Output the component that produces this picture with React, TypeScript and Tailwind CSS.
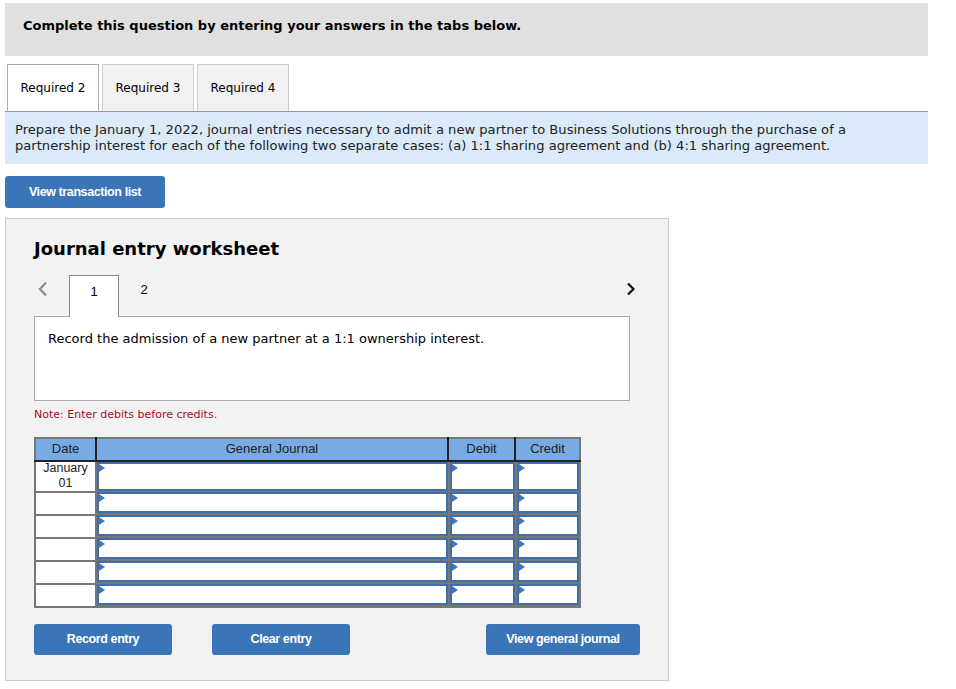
import React from "react";

const verdana = { fontFamily: '"DejaVu Sans", Verdana, sans-serif' };

function Btn({ label, className }: { label: string; className?: string }) {
  return (
    <button
      className={`h-[31px] rounded-[3px] bg-[#3a75b7] text-white text-[12.5px] font-bold tracking-[-0.4px] font-['Liberation_Sans',Arial,sans-serif] ${className ?? ""}`}
    >
      {label}
    </button>
  );
}

function Cell({ tall }: { tall?: boolean }) {
  return (
    <div className={`relative ${tall ? "h-[29px]" : "h-[21px]"} border-2 border-[#3e6fa8] bg-white`}>
      <span className="absolute left-0 top-0 h-0 w-0 border-y-[4px] border-l-[6px] border-y-transparent border-l-[#3e78c0]" />
    </div>
  );
}

export default function App() {
  const rows = [0, 1, 2, 3, 4, 5];
  return (
    <div className="w-[956px] h-[689px] bg-white text-[#222]" style={verdana}>
      <div className="pt-[3px] px-[5px] w-[923px] box-content">
        <div className="h-[53px] bg-[#e0e0e0] flex items-center pl-[18px] pb-[8px] text-[13px] font-bold text-black">
          Complete this question by entering your answers in the tabs below.
        </div>

        {/* tabs */}
        <div className="mt-[8px] flex gap-[3px] pl-[2px] border-b border-[#999]">
          <div className="w-[92px] h-[47px] -mb-px bg-white border border-[#aaa] border-b-white flex items-center justify-center text-[12px] text-black">
            Required 2
          </div>
          <div className="w-[92px] h-[47px] bg-[#f2f2f2] border border-[#ccc] border-b-0 flex items-center justify-center text-[12px] text-black">
            Required 3
          </div>
          <div className="w-[92px] h-[47px] bg-[#f2f2f2] border border-[#ccc] border-b-0 flex items-center justify-center text-[12px] text-black">
            Required 4
          </div>
        </div>

        <div className="h-[52px] bg-[#daeaf8] px-[10px] pt-[10px] text-[13.1px] leading-[16px] text-[#222]">
          Prepare the January 1, 2022, journal entries necessary to admit a new partner to Business Solutions through the purchase of a
          <br />
          partnership interest for each of the following two separate cases: (a) 1:1 sharing agreement and (b) 4:1 sharing agreement.
        </div>

        <Btn label="View transaction list" className="mt-[12px] w-[160px] h-[32px]" />

        {/* worksheet */}
        <div className="mt-[10px] w-[664px] h-[463px] bg-[#f2f2f2] border border-[#ccc] px-[28px] pt-[18px]">
          <div className="text-[18px] font-bold text-black leading-[24px]">Journal entry worksheet</div>

          <div className="mt-[13px] flex items-end h-[42px] relative">
            <svg className="absolute left-[4px] top-[7px]" width="10" height="16" viewBox="0 0 10 16">
              <path d="M8 1.5 L2 8 L8 14.5" fill="none" stroke="#8a8a8a" strokeWidth="2.2" />
            </svg>
            <div className="ml-[35px] w-[50px] h-[42px] bg-white border border-[#888] border-b-0 -mb-px relative z-10 flex items-center justify-center pb-[10px] text-[13px] text-black font-['Liberation_Sans',sans-serif]">
              1
            </div>
            <div className="w-[50px] h-[42px] flex items-center justify-center pb-[10px] text-[13px] text-black font-['Liberation_Sans',sans-serif]">
              2
            </div>
            <svg className="absolute right-[4px] top-[8px]" width="10" height="14" viewBox="0 0 10 14">
              <path d="M2 1.5 L7.5 7 L2 12.5" fill="none" stroke="#111" strokeWidth="2.2" />
            </svg>
          </div>

          <div className="w-[596px] h-[85px] bg-white border border-[#aaa] pl-[13px] pt-[12px] text-[13px] text-black">
            Record the admission of a new partner at a 1:1 ownership interest.
          </div>

          <div className="mt-[6px] text-[11px] text-[#a0102a]">Note: Enter debits before credits.</div>

          {/* table */}
          <table className="mt-[13px] border-collapse border-2 border-[#777] font-['Liberation_Sans',Arial,sans-serif] text-[13px]">
            <thead>
              <tr className="h-[23px] bg-[#78aae3] text-[#222]">
                <th className="w-[61px] border-r-2 border-b-2 border-r-[#222] border-b-[#222] font-normal p-0">Date</th>
                <th className="w-[352px] border-r-2 border-b-2 border-r-[#222] border-b-[#222] font-normal p-0">General Journal</th>
                <th className="w-[67px] border-r-2 border-b-2 border-r-[#222] border-b-[#222] font-normal p-0">Debit</th>
                <th className="w-[65px] border-b-2 border-b-[#222] font-normal p-0">Credit</th>
              </tr>
            </thead>
            <tbody>
              {rows.map((r) => (
                <tr key={r}>
                  <td className="bg-white border-r-2 border-b-2 border-[#777] text-center text-[12.5px] leading-[15px] align-middle p-0">
                    {r === 0 ? (
                      <div className="h-[29px] flex flex-col justify-center">
                        January
                        <br />
                        01
                      </div>
                    ) : (
                      <div className="h-[21px]" />
                    )}
                  </td>
                  <td className="p-0 bg-[#777] align-top">
                    <Cell tall={r === 0} />
                  </td>
                  <td className="p-0 pl-[2px] bg-[#777] align-top">
                    <Cell tall={r === 0} />
                  </td>
                  <td className="p-0 pl-[2px] bg-[#777] align-top">
                    <Cell tall={r === 0} />
                  </td>
                </tr>
              ))}
            </tbody>
          </table>

          <div className="mt-[16px] flex items-start">
            <Btn label="Record entry" className="w-[138px]" />
            <Btn label="Clear entry" className="ml-[40px] w-[138px]" />
            <Btn label="View general journal" className="ml-[136px] w-[154px]" />
          </div>
        </div>
      </div>
    </div>
  );
}
